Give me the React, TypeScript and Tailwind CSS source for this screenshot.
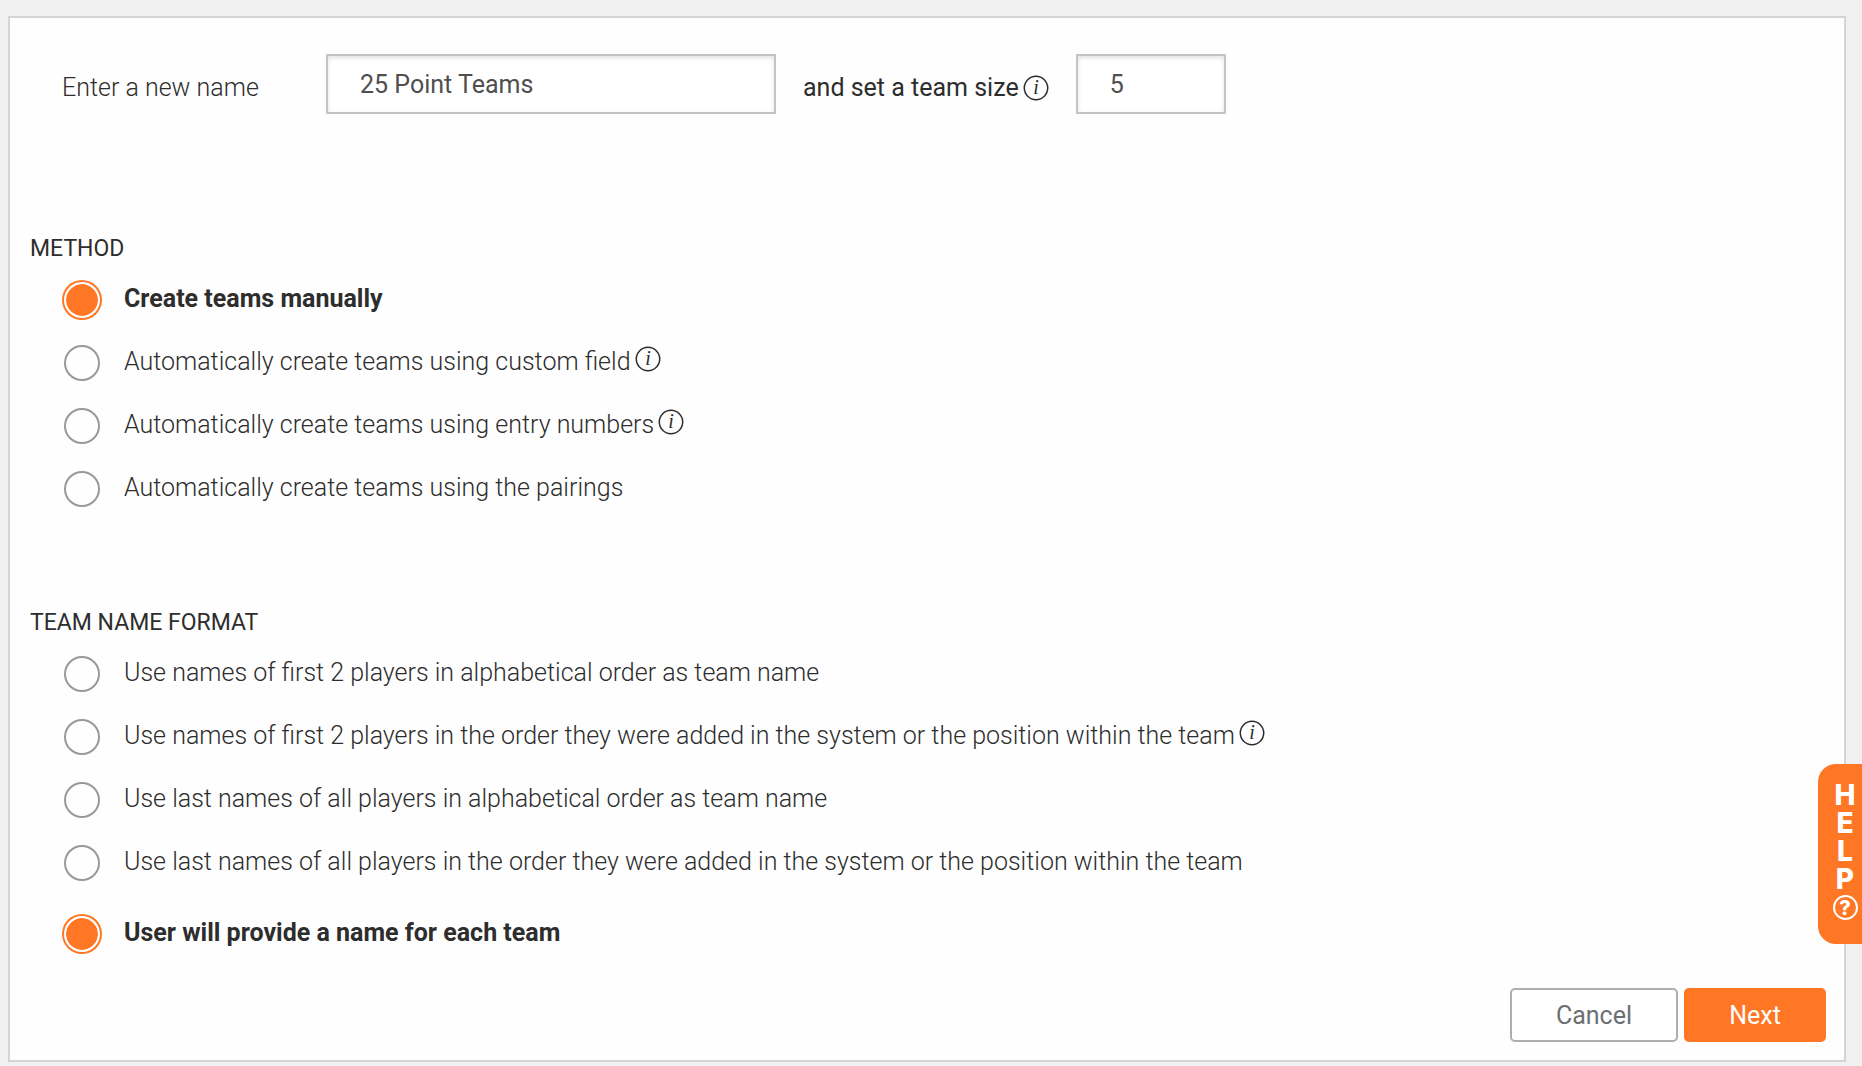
import React, { useState } from 'react';

type Option = {
    value: string;
    label: string;
    info?: string;
    spaced?: boolean;
};

const METHODS: Option[] = [
    { value: 'manual', label: 'Create teams manually' },
    { value: 'custom-field', label: 'Automatically create teams using custom field', info: 'About custom fields' },
    { value: 'entry-numbers', label: 'Automatically create teams using entry numbers', info: 'About entry numbers' },
    { value: 'pairings', label: 'Automatically create teams using the pairings' },
];

const NAME_FORMATS: Option[] = [
    { value: 'first2-alpha', label: 'Use names of first 2 players in alphabetical order as team name' },
    {
        value: 'first2-order',
        label: 'Use names of first 2 players in the order they were added in the system or the position within the team',
        info: 'About player order',
    },
    { value: 'last-alpha', label: 'Use last names of all players in alphabetical order as team name' },
    {
        value: 'last-order',
        label: 'Use last names of all players in the order they were added in the system or the position within the team',
    },
    { value: 'custom', label: 'User will provide a name for each team', spaced: true },
];

const InfoIcon: React.FC<{ title: string }> = ({ title }) => (
    <button type="button" aria-label={title} className="shrink-0 cursor-pointer">
        <svg viewBox="0 0 26 26" className="w-[26px] h-[26px]" aria-hidden="true">
            <circle cx="13" cy="13" r="11.7" fill="none" stroke="#2d2d2d" strokeWidth="1.5" />
            <text x="13" y="19" textAnchor="middle" fontSize="20" fontStyle="italic" fontFamily="Liberation Serif, serif" fill="#2d2d2d">i</text>
        </svg>
    </button>
);

const RadioGroup: React.FC<{
    name: string;
    legend: string;
    options: Option[];
    value: string;
    onChange: (value: string) => void;
}> = ({ name, legend, options, value, onChange }) => (
    <fieldset className="pl-5">
        <legend className="text-[23px] leading-[30px]">{legend}</legend>
        <div className="mt-[18px] pl-[34px] flex flex-col gap-[27px]">
            {options.map(option => {
                const id = `${name}-${option.value}`;
                return (
                    <div key={option.value} className={`flex items-center min-h-9 ${option.spaced ? 'mt-2' : ''}`}>
                        <input
                            type="radio"
                            id={id}
                            name={name}
                            checked={value === option.value}
                            onChange={() => onChange(option.value)}
                            className="appearance-none shrink-0 w-9 h-9 rounded-full border-2 border-[#999999] bg-clip-padding checked:border-white checked:bg-[#ff7624] checked:ring-2 checked:ring-[#ff7624] cursor-pointer"
                        />
                        <label htmlFor={id} className={`ml-6 pb-[2px] leading-8 ${value === option.value ? 'font-bold' : 'font-light'}`}>
                            {option.label}
                        </label>
                        {option.info && (
                            <span className="ml-1 pb-2 flex">
                                <InfoIcon title={option.info} />
                            </span>
                        )}
                    </div>
                );
            })}
        </div>
    </fieldset>
);

const HelpTab: React.FC = () => (
    <button
        type="button"
        aria-label="Help"
        className="fixed right-0 bottom-[122px] w-11 h-[180px] pt-[17px] pl-[10px] rounded-l-[18px] bg-[#ff7624] text-white flex flex-col items-center justify-start font-['Inter',sans-serif] font-extrabold text-[28px] leading-7 cursor-pointer"
    >
        {['H', 'E', 'L', 'P'].map(letter => (
            <span key={letter}>{letter}</span>
        ))}
        <span className="mt-[2px] w-[25px] h-[25px] shrink-0 rounded-full border-2 border-white flex items-center justify-center text-xl leading-5">?</span>
    </button>
);

const App: React.FC = () => {
    const [teamName, setTeamName] = useState('25 Point Teams');
    const [teamSize, setTeamSize] = useState('5');
    const [method, setMethod] = useState('manual');
    const [nameFormat, setNameFormat] = useState('custom');

    const inputClass = 'h-[60px] px-8 border-2 border-[#c4c4c4] bg-white text-[#4f4f4f] shadow-[inset_0_2px_4px_rgba(0,0,0,0.12)] outline-none';

    return (
        <div className="min-h-screen bg-[#f0f0f0] pt-4 pr-4 pb-1 pl-2 font-['Roboto',sans-serif] text-[25px] text-[#2d2d2d]">
            <form className="border-2 border-[#d4d4d4] bg-[#fefefe]" onSubmit={e => e.preventDefault()}>
                <div className="flex items-center pt-9 pl-[52px]">
                    <label htmlFor="team-name" className="w-[264px] pt-2 leading-8 font-light">Enter a new name</label>
                    <input
                        id="team-name"
                        type="text"
                        value={teamName}
                        onChange={e => setTeamName(e.target.value)}
                        className={`w-[450px] ${inputClass}`}
                    />
                    <div className="mx-[27px] pt-2 flex items-center gap-1">
                        <label htmlFor="team-size" className="leading-8">and set a team size</label>
                        <InfoIcon title="About team size" />
                    </div>
                    <input
                        id="team-size"
                        type="text"
                        value={teamSize}
                        onChange={e => setTeamSize(e.target.value)}
                        className={`w-[150px] ${inputClass}`}
                    />
                </div>

                <div className="mt-[120px]">
                    <RadioGroup name="method" legend="METHOD" options={METHODS} value={method} onChange={setMethod} />
                </div>
                <div className="mt-[101px]">
                    <RadioGroup name="name-format" legend="TEAM NAME FORMAT" options={NAME_FORMATS} value={nameFormat} onChange={setNameFormat} />
                </div>

                <div className="mt-9 pb-[18px] pr-[18px] flex justify-end gap-[6px]">
                    <button type="button" className="w-[168px] h-[54px] pt-[2px] rounded-[5px] border-2 border-[#adadb2] bg-white text-[#6b7073] cursor-pointer">
                        Cancel
                    </button>
                    <button type="submit" className="w-[142px] h-[54px] pt-[2px] rounded-[5px] bg-[#ff7624] text-white cursor-pointer">
                        Next
                    </button>
                </div>
            </form>
            <HelpTab />
        </div>
    );
};

export default App;
